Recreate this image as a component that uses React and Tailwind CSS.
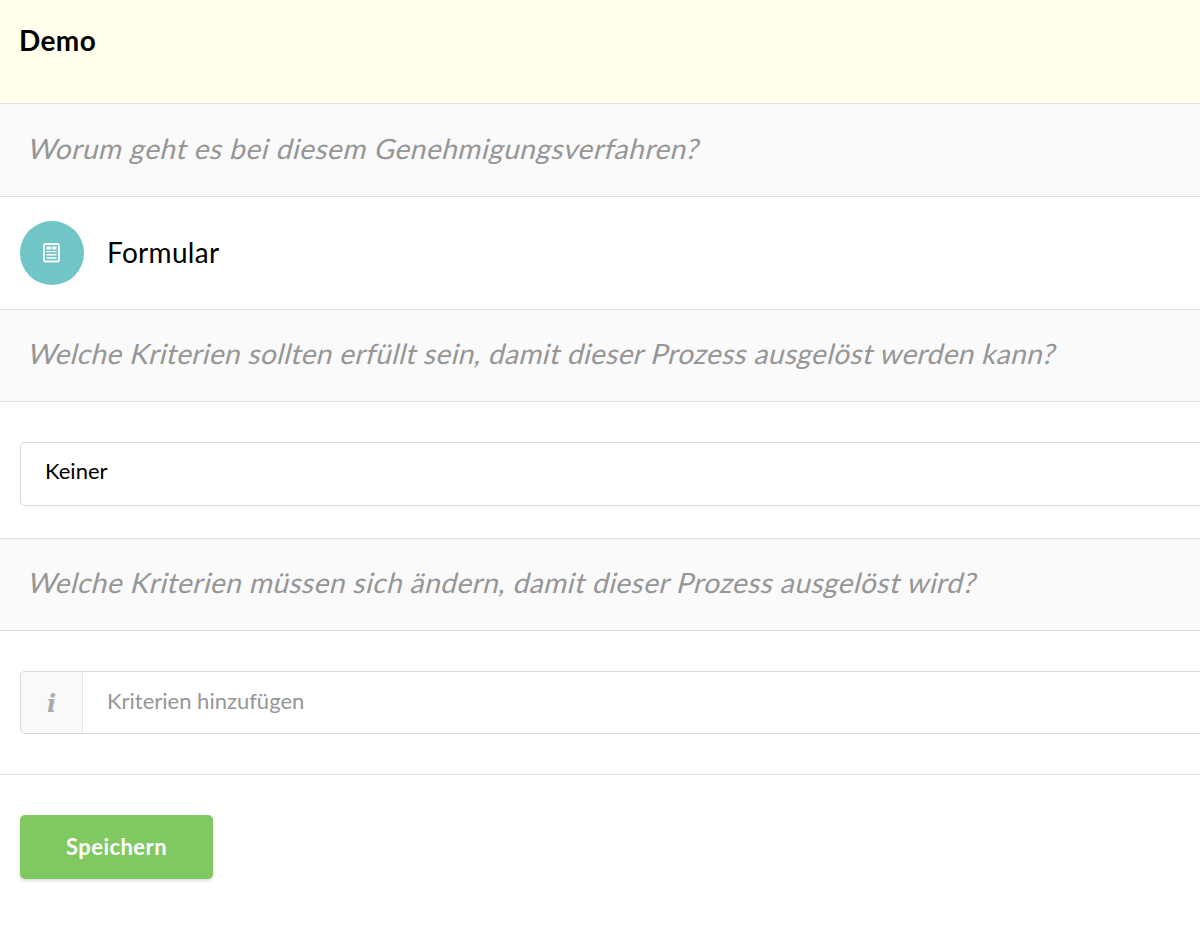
import React from 'react';

const FormIcon = () => (
  <svg width="18" height="20" viewBox="0 0 18 20" fill="none">
    <rect x="1" y="1" width="15" height="17.5" rx="1.4" stroke="#fff" strokeWidth="1.8" />
    <path fill="#fff" d="M3.5 3.4h4.6v3H3.5zM9.2 3.4h4.3v3H9.2zM3.5 8h10v1.3h-10zM3.5 11h10v1.6h-10zM3.5 14.2h10v1.6h-10z" />
  </svg>
);

const Question = ({ children, className = '', textClass }) => (
  <div className={`border-y border-[#e2e2e2] bg-[#fafafa] pl-[29px] ${className}`}>
    <h2 className={`-skew-x-[14deg] text-[28px] text-[#969696] whitespace-nowrap ${textClass}`}>
      {children}
    </h2>
  </div>
);

const App = () => {
  return (
    <div className="h-[934px] overflow-hidden bg-white text-black font-['Lato',sans-serif]">
      <header className="h-[103px] bg-[#ffffeb] pl-[19px] pt-5">
        <h1 className="text-[28px] leading-10 font-bold tracking-[0.4px]">Demo</h1>
      </header>

      <Question className="h-[94px]" textClass="leading-[89px] tracking-[0.52px]">
        Worum geht es bei diesem Genehmigungsverfahren?
      </Question>

      <div className="flex h-28 items-center gap-[23px] pl-5">
        <div className="flex size-16 items-center justify-center rounded-full bg-[#70c6c7]">
          <FormIcon />
        </div>
        <span className="pb-0.5 text-[28px] leading-10 tracking-[0.3px]">Formular</span>
      </div>

      <Question className="h-[93px]" textClass="leading-[87px] tracking-[0.37px]">
        Welche Kriterien sollten erfüllt sein, damit dieser Prozess ausgelöst werden kann?
      </Question>

      <div className="h-[136px] pl-5 pt-10">
        <div className="h-16 rounded-l-[5px] border border-r-0 border-[#d9d9d9] pl-6 text-[22px] leading-[56px]">
          Keiner
        </div>
      </div>

      <Question className="h-[93px]" textClass="leading-[87px] tracking-[0.45px]">
        Welche Kriterien müssen sich ändern, damit dieser Prozess ausgelöst wird?
      </Question>

      <div className="h-36 border-b border-[#e2e2e2] pl-5 pt-10">
        <div className="flex h-[63px] overflow-hidden rounded-l-[5px] border border-r-0 border-[#d9d9d9]">
          <div className="w-[62px] border-r border-[#e8e8e8] bg-[#f9f9f9] text-center font-['DejaVu_Serif',serif] text-[24px] leading-[64px] font-bold italic text-[#aaaaaa]">
            i
          </div>
          <span className="pl-6 text-[22px] leading-[58px] text-[#969696]">Kriterien hinzufügen</span>
        </div>
      </div>

      <div className="pl-5 pt-10">
        <button className="block h-16 w-[193px] rounded-[5px] bg-[#80c860] pb-0.5 text-center text-[22px] font-bold tracking-[0.45px] text-white shadow-[0_2px_3px_rgba(0,0,0,0.12)]">
          Speichern
        </button>
      </div>
    </div>
  );
};

export default App;
